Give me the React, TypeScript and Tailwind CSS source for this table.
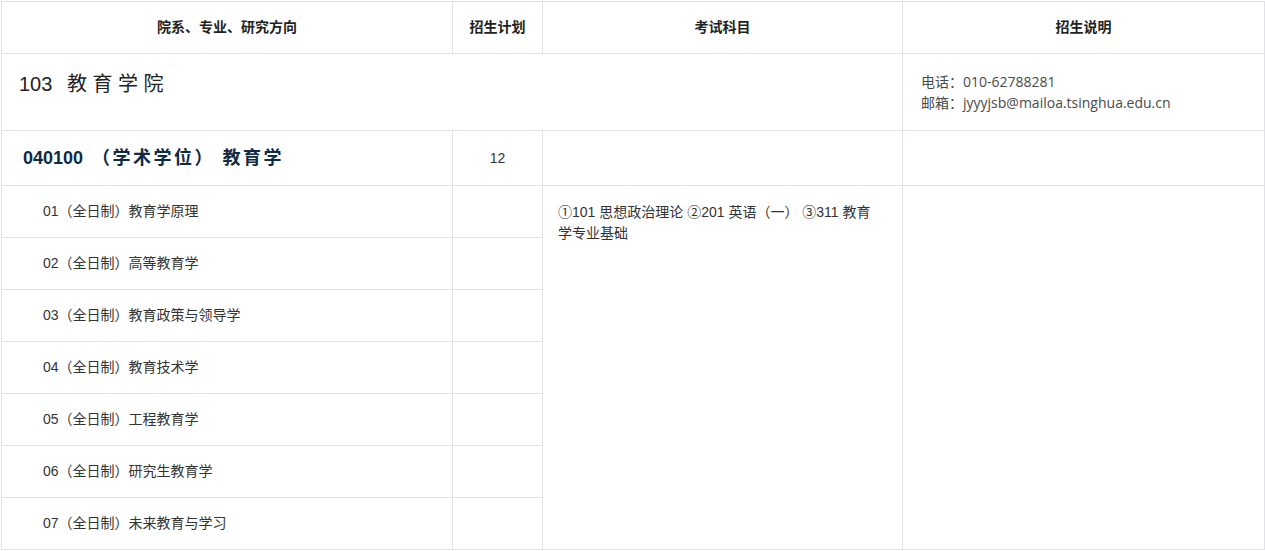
import React from "react";

const font = { fontFamily: '"Liberation Sans", "Noto Sans CJK SC", sans-serif' };

const subRows = [
  "01（全日制）教育学原理",
  "02（全日制）高等教育学",
  "03（全日制）教育政策与领导学",
  "04（全日制）教育技术学",
  "05（全日制）工程教育学",
  "06（全日制）研究生教育学",
  "07（全日制）未来教育与学习",
];

export default function App() {
  const bd = "border border-[#dfe3e8]";
  return (
    <div className="w-[1265px] h-[551px] bg-white pl-[1px] pt-[1px] overflow-hidden" style={font}>
      <table className="border-collapse table-fixed w-[1263px] text-[14px] text-[#333]">
        <colgroup>
          <col className="w-[451px]" />
          <col className="w-[90px]" />
          <col className="w-[360px]" />
          <col className="w-[362px]" />
        </colgroup>
        <thead>
          <tr className="h-[52px]">
            <th className={`${bd} font-bold text-[#222] text-center`}>院系、专业、研究方向</th>
            <th className={`${bd} font-bold text-[#222] text-center`}>招生计划</th>
            <th className={`${bd} font-bold text-[#222] text-center`}>考试科目</th>
            <th className={`${bd} font-bold text-[#222] text-center`}>招生说明</th>
          </tr>
        </thead>
        <tbody>
          <tr className="h-[77px]">
            <td colSpan={3} className={`${bd} align-top pl-[17px] pt-[15px]`}>
              <span className="text-[20px] leading-[30px] text-[#222]">
                103 <span className="ml-[9px] tracking-[5.5px]">教育学院</span>
              </span>
            </td>
            <td className={`${bd} align-middle pl-[18px] text-[14px] leading-[21px] text-[#4a4a4a]`}>
              <div style={{ fontFamily: '"Open Sans", "Noto Sans CJK SC", sans-serif' }}>电话：010-62788281</div>
              <div style={{ fontFamily: '"Open Sans", "Noto Sans CJK SC", sans-serif' }}>邮箱：jyyyjsb@mailoa.tsinghua.edu.cn</div>
            </td>
          </tr>
          <tr className="h-[55px]">
            <td className={`${bd} pl-[21px] text-[18px] font-bold text-[#0f2a44]`}>
              040100 <span className="ml-[4px] tracking-[2.5px]">（学术学位） 教育学</span>
            </td>
            <td className={`${bd} text-center`}>12</td>
            <td className={bd}></td>
            <td className={bd}></td>
          </tr>
          {subRows.map((t, i) => (
            <tr key={i} className="h-[52px]">
              <td className={`${bd} pl-[41px]`}>{t}</td>
              <td className={bd}></td>
              {i === 0 && (
                <>
                  <td rowSpan={7} className={`${bd} align-top pl-[15px] pr-[20px] pt-[16px] leading-[21px]`}>
                    ①101 思想政治理论 ②201 英语（一） ③311 教育学专业基础
                  </td>
                  <td rowSpan={7} className={bd}></td>
                </>
              )}
            </tr>
          ))}
        </tbody>
      </table>
    </div>
  );
}
